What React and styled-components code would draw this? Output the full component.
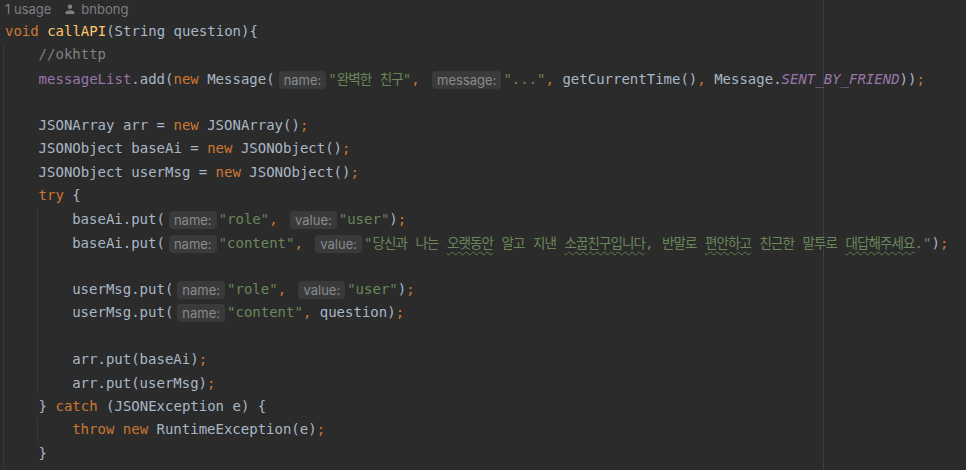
import React from 'react';
import styled, { createGlobalStyle } from 'styled-components';

const CHAR = 8.4;
const LINE = 23.44;

const colors = {
  kw: '#cc7832',
  str: '#6a8759',
  fn: '#ffc66d',
  field: '#9876aa',
  comment: '#808080',
  punct: '#cc7832',
};

const GlobalStyle = createGlobalStyle`
  html, body {
    margin: 0;
    padding: 0;
    background: #2b2b2b;
  }
  body {
    overflow: hidden;
  }
`;

const Editor = styled.div`
  width: 966px;
  height: 470px;
  overflow: hidden;
  box-sizing: border-box;
  padding-left: 5px;
  background:
    linear-gradient(to right, transparent 823px, #3e3e3e 823px, #3e3e3e 824px, transparent 824px),
    #2b2b2b;
  color: #a9b7c6;
  font-family: "DejaVu Sans Mono", "Liberation Mono", monospace;
  font-size: 14px;
`;

const Usage = styled.div`
  display: flex;
  align-items: center;
  box-sizing: border-box;
  height: 20px;
  padding-bottom: 3px;
  font-family: Inter, "Noto Sans", sans-serif;
  font-size: 13px;
  color: #7c7f84;
`;

const Author = styled.span`
  display: inline-flex;
  align-items: center;
  gap: 6px;
  margin-left: 14px;
`;

const Block = styled.div`
  margin-left: -2px;
  padding-left: ${4 * CHAR + 1}px;
  border-left: 1px solid #383838;
`;

const Line = styled.div`
  height: ${LINE}px;
  line-height: ${LINE}px;
  white-space: pre;
`;

const Tok = styled.span`
  color: ${p => colors[p.$k]};
  font-style: ${p => (p.$italic ? 'italic' : 'normal')};
`;

const Hint = styled.span`
  display: inline-block;
  height: 18px;
  line-height: 18px;
  margin: 0 2px 0 4px;
  padding: 0 5px;
  border-radius: 4px;
  background: #3a3a3a;
  color: #878a8e;
  font-family: Inter, "Noto Sans", sans-serif;
  font-size: 13px;
  vertical-align: middle;
`;

const Hangul = styled.span`
  font-family: "Noto Sans CJK KR", sans-serif;
  font-size: 13.5px;
  letter-spacing: -0.9px;
`;

const Typo = styled.span`
  text-decoration: underline wavy #5f7d4e;
  text-decoration-thickness: 1px;
  text-underline-offset: 3px;
`;

// wrap runs of Hangul so they take the narrower width the IDE gives them
const ko = text =>
  text.split(/([\uAC00-\uD7A3]+)/).map((part, i) =>
    /[\uAC00-\uD7A3]/.test(part) ? <Hangul key={i}>{part}</Hangul> : part
  );

const UserIcon = () => (
  <svg width="10" height="10" viewBox="0 0 10 10" fill="#7c7f84">
    <circle cx="5" cy="2.8" r="2.3" />
    <path d="M0.5 10 V8.6 C0.5 7.1 2.2 6.2 5 6.2 C7.8 6.2 9.5 7.1 9.5 8.6 V10 Z" />
  </svg>
);

const Semi = () => <Tok $k="punct">;</Tok>;
const Comma = () => <Tok $k="punct">, </Tok>;
const New = () => <Tok $k="kw">new</Tok>;

const App = () => (
  <>
    <GlobalStyle />
    <Editor>
      <Usage>
        1 usage
        <Author>
          <UserIcon />
          bnbong
        </Author>
      </Usage>
      <Line>
        <Tok $k="kw">void</Tok> <Tok $k="fn">callAPI</Tok>(String question){'{'}
      </Line>
      <Block>
        <Line>
          <Tok $k="comment">//okhttp</Tok>
        </Line>
        <Line>
          <Tok $k="field">messageList</Tok>.add(<New /> Message(
          <Hint>name:</Hint>
          <Tok $k="str">"{ko('완벽한 친구')}"</Tok>
          <Comma />
          <Hint>message:</Hint>
          <Tok $k="str">"..."</Tok>
          <Comma />
          getCurrentTime()
          <Comma />
          Message.<Tok $k="field" $italic>SENT_BY_FRIEND</Tok>))<Semi />
        </Line>
        <Line />
        <Line>
          JSONArray arr = <New /> JSONArray()<Semi />
        </Line>
        <Line>
          JSONObject baseAi = <New /> JSONObject()<Semi />
        </Line>
        <Line>
          JSONObject userMsg = <New /> JSONObject()<Semi />
        </Line>
        <Line>
          <Tok $k="kw">try</Tok> {'{'}
        </Line>
        <Block>
          <Line>
            baseAi.put(<Hint>name:</Hint>
            <Tok $k="str">"role"</Tok>
            <Comma />
            <Hint>value:</Hint>
            <Tok $k="str">"user"</Tok>)<Semi />
          </Line>
          <Line>
            baseAi.put(<Hint>name:</Hint>
            <Tok $k="str">"content"</Tok>
            <Comma />
            <Hint>value:</Hint>
            <Tok $k="str">
              "{ko('당신과 나는 ')}
              <Typo>{ko('오랫동안')}</Typo>
              {ko(' 알고 지낸 ')}
              <Typo>{ko('소꿉친구입니다')}</Typo>
              {ko(', 반말로 ')}
              <Typo>{ko('편안하고')}</Typo>
              {ko(' 친근한 말투로 ')}
              <Typo>{ko('대답해주세요')}</Typo>."
            </Tok>
            )<Semi />
          </Line>
          <Line />
          <Line>
            userMsg.put(<Hint>name:</Hint>
            <Tok $k="str">"role"</Tok>
            <Comma />
            <Hint>value:</Hint>
            <Tok $k="str">"user"</Tok>)<Semi />
          </Line>
          <Line>
            userMsg.put(<Hint>name:</Hint>
            <Tok $k="str">"content"</Tok>
            <Comma />
            question)<Semi />
          </Line>
          <Line />
          <Line>
            arr.put(baseAi)<Semi />
          </Line>
          <Line>
            arr.put(userMsg)<Semi />
          </Line>
        </Block>
        <Line>
          {'} '}
          <Tok $k="kw">catch</Tok> (JSONException e) {'{'}
        </Line>
        <Block>
          <Line>
            <Tok $k="kw">throw</Tok> <New /> RuntimeException(e)<Semi />
          </Line>
        </Block>
        <Line>{'}'}</Line>
        <Line />
      </Block>
    </Editor>
  </>
);

export default App;
